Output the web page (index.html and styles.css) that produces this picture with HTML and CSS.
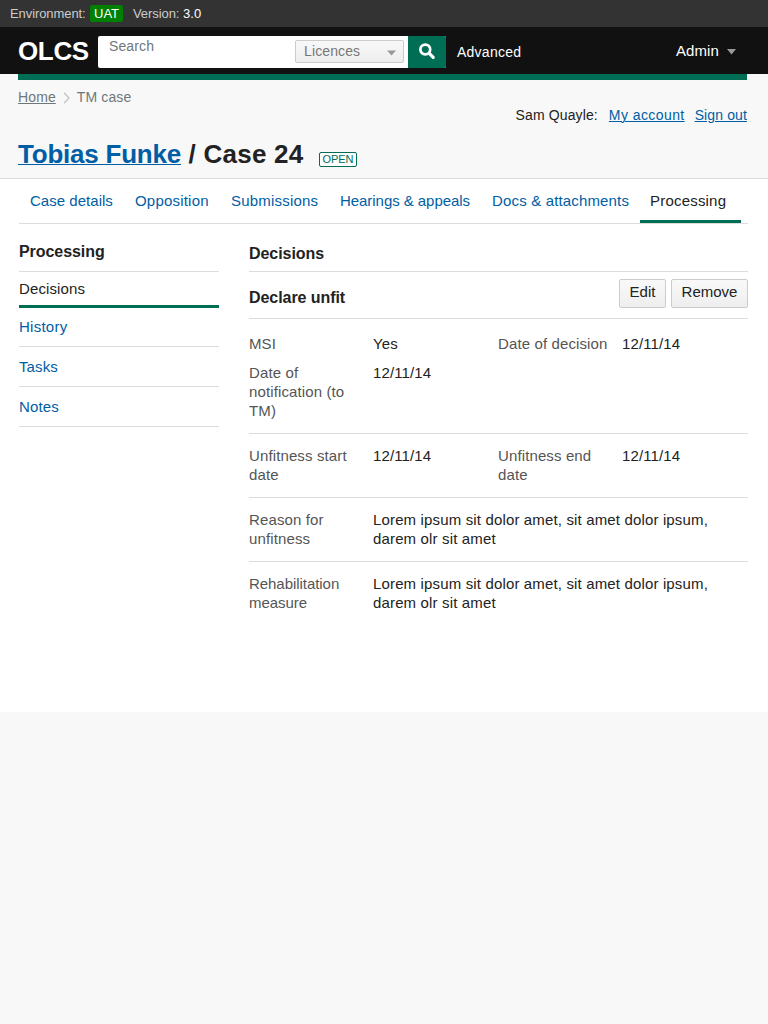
FILE: index.html
```html
<!DOCTYPE html>
<html lang="en">
<head>
<meta charset="utf-8">
<title>OLCS - Case 24</title>
<link rel="stylesheet" href="styles.css">
</head>
<body>
<div class="env"><span class="env-label">Environment:</span><span class="env-tag">UAT</span><span class="env-version">Version:</span><span class="env-number">3.0</span></div>
<header class="top">
  <div class="logo">OLCS</div>
  <form class="search">
    <span class="search-text">Search</span>
    <span class="search-select"><span>Licences</span><svg width="9" height="6" viewBox="0 0 9 6"><path d="M0 .5h9L4.5 5.5z" fill="#999"/></svg></span>
    <span class="search-button"><svg width="18" height="18" viewBox="0 0 18 18" fill="none" stroke="#fff"><circle cx="7.3" cy="6.5" r="4.9" stroke-width="2.7"/><path d="M11 10.2l4.2 4.2" stroke-width="3.3" stroke-linecap="round"/></svg></span>
  </form>
  <a class="advanced">Advanced</a>
  <div class="admin"><span>Admin</span><svg width="9" height="6" viewBox="0 0 9 6"><path d="M0 0h9L4.5 5.5z" fill="#999"/></svg></div>
</header>
<div class="page-head">
  <div class="stripe"></div>
  <nav class="crumbs"><a class="home">Home</a><svg width="7" height="12" viewBox="0 0 7 12"><path d="M1 .8L6 6 1 11.2" fill="none" stroke="#bfc1c3" stroke-width="1.3"/></svg><span>TM case</span></nav>
  <div class="account"><span class="user">Sam Quayle:</span><a class="my">My account</a><a class="out">Sign out</a></div>
  <div class="title"><h1><a>Tobias Funke</a> / Case 24</h1><span class="status">OPEN</span></div>
</div>
<main class="main">
  <nav class="tabs">
    <a class="t1">Case details</a><a class="t2">Opposition</a><a class="t3">Submissions</a><a class="t4">Hearings &amp; appeals</a><a class="t5">Docs &amp; attachments</a><a class="current">Processing</a>
  </nav>
  <div class="columns">
    <aside class="side">
      <h2>Processing</h2>
      <a class="active">Decisions</a>
      <a>History</a>
      <a>Tasks</a>
      <a>Notes</a>
    </aside>
    <section class="content">
      <h2>Decisions</h2>
      <div class="actions"><h3>Declare unfit</h3><div class="buttons"><span class="btn edit">Edit</span><span class="btn remove">Remove</span></div></div>
      <dl class="group first">
        <dt>MSI</dt><dd>Yes</dd><dt>Date of decision</dt><dd>12/11/14</dd>
        <dt>Date of notification (to TM)</dt><dd>12/11/14</dd>
      </dl>
      <dl class="group">
        <dt>Unfitness start date</dt><dd>12/11/14</dd><dt>Unfitness end date</dt><dd>12/11/14</dd>
      </dl>
      <dl class="group">
        <dt>Reason for unfitness</dt><dd class="wide">Lorem ipsum sit dolor amet, sit amet dolor ipsum, darem olr sit amet</dd>
      </dl>
      <dl class="group">
        <dt class="tight">Rehabilitation measure</dt><dd class="wide">Lorem ipsum sit dolor amet, sit amet dolor ipsum, darem olr sit amet</dd>
      </dl>
    </section>
  </div>
</main>
</body>
</html>
```

FILE: styles.css
```css
* { box-sizing: border-box; }
body { margin: 0; background: #f8f8f8; color: #222; font: 15px/19px "Liberation Sans", Arial, sans-serif; letter-spacing: .12px; white-space: nowrap; }
h1, h2, h3, dl, dd, dt { margin: 0; }
svg { display: block; flex: none; }

.env { display: flex; align-items: flex-start; height: 27px; padding: 5px 10px 0; background: #333; color: #ccc; font-size: 13px; line-height: 17px; letter-spacing: -.08px; }
.env-label { width: 76px; }
.env-tag { width: 33px; margin: 0 10px 0 4px; border-radius: 2px; background: #008000; color: #fff; text-align: center; }
.env-version { width: 46px; }
.env-number { margin-left: 4px; color: #fff; letter-spacing: .1px; }

.top { display: flex; align-items: flex-start; height: 47px; padding-left: 18px; background: #111; color: #fff; }
.logo { width: 80px; padding-top: 9px; font-size: 26px; font-weight: bold; line-height: 30px; letter-spacing: -.35px; }
.search { display: flex; width: 348px; height: 32px; margin-top: 9px; background: #fff; border-radius: 2px; overflow: hidden; font-size: 14px; }
.search-text { flex: 1; padding: 1px 0 0 11px; color: #6f777b; }
.search-select { display: flex; justify-content: space-between; width: 109px; height: 23px; margin: 4px 4px 0 0; padding: 1px 7px 0 8px; border: 1px solid #ccc; border-radius: 2px; background: linear-gradient(#f8f8f8, #eee); color: #777; }
.search-select svg { margin-top: 8px; }
.search-button { width: 38px; padding: 7px 0 0 10px; background: #006d55; }
.advanced { margin: 16px 0 0 11px; font-size: 14px; letter-spacing: .25px; }
.admin { display: flex; margin: 14px 32px 0 auto; }
.admin svg { margin: 8px 0 0 8px; }

.page-head { height: 105px; padding: 0 21px 0 18px; border-bottom: 1px solid #dcdcdc; }
.stripe { height: 6px; background: #006d55; }
.crumbs { display: flex; height: 26px; padding-top: 8px; color: #6f777b; font-size: 14px; }
.crumbs svg { margin: 4px 7px 0 7px; }
.home, .account a { text-decoration: underline; text-underline-offset: 1px; text-decoration-thickness: 1px; }
.account { display: flex; justify-content: flex-end; height: 19px; font-size: 14px; }
.account a, .title a { color: #005ea5; }
.my { margin: 0 10px 0 11px; letter-spacing: .42px; }
.title { display: flex; align-items: flex-start; padding-top: 14px; }
h1 { width: 285px; font-size: 26px; line-height: 30px; letter-spacing: .25px; }
h1 a { letter-spacing: -.22px; text-decoration: underline; text-underline-offset: 1px; text-decoration-thickness: 1px; text-decoration-skip-ink: none; }
.status { width: 38px; height: 15px; margin: 13px 0 0 16px; border: 1px solid #006d55; border-radius: 2px; color: #006d55; background: #fff; font-size: 11px; line-height: 13px; letter-spacing: -.1px; text-align: center; }

.main { height: 533px; padding: 0 20px 0 19px; background: #fff; }
.tabs { display: flex; height: 45px; padding-top: 12px; border-bottom: 1px solid #dcdcdc; color: #005ea5; letter-spacing: .2px; }
.tabs a { height: 32px; padding: 0 0 0 11px; }
.tabs .t1 { width: 105px; letter-spacing: .03px; }
.tabs .t2 { width: 96px; }
.tabs .t3 { width: 109px; }
.tabs .t4 { width: 152px; letter-spacing: -.05px; }
.tabs .t5 { width: 159px; letter-spacing: .16px; }
.tabs .current { width: 101px; padding: 0 10px; border-bottom: 3px solid #006d55; color: #222; }
.columns { display: grid; grid-template-columns: 200px 499px; column-gap: 30px; }
.side { display: flex; flex-direction: column; color: #005ea5; }
h2, h3 { color: #222; font-size: 16px; line-height: 19px; letter-spacing: -.06px; }
.side h2 { height: 48px; padding-top: 18px; border-bottom: 1px solid #dcdcdc; }
.side a { height: 40px; padding-top: 10px; border-bottom: 1px solid #dcdcdc; }
.side .active { height: 36px; padding-top: 7px; border-bottom: 3px solid #006d55; color: #222; }
.side .active + a { height: 39px; padding-top: 9px; letter-spacing: .25px; }
.content h2 { height: 48px; padding-top: 20px; border-bottom: 1px solid #dcdcdc; }
.actions { display: flex; justify-content: space-between; height: 47px; border-bottom: 1px solid #dcdcdc; }
.actions h3 { padding-top: 16px; }
.buttons { display: flex; gap: 5px; padding-top: 7px; letter-spacing: 0; }
.btn { height: 29px; padding-top: 2px; border: 1px solid #ccc; border-radius: 2px; background: linear-gradient(#f9f9f9, #eee); text-align: center; }
.edit { width: 47px; }
.remove { width: 77px; }
.group { display: grid; grid-template-columns: 124px 125px 124px 1fr; row-gap: 10px; padding: 12px 0 13px; border-bottom: 1px solid #dcdcdc; white-space: normal; }
.group.first { padding-top: 15px; }
.group:last-child { border-bottom: 0; }
.group dt { padding-right: 12px; color: #555; }
.group .tight { letter-spacing: -.05px; }
.group .wide { grid-column: 2 / -1; padding-right: 14px; letter-spacing: .15px; }
```
